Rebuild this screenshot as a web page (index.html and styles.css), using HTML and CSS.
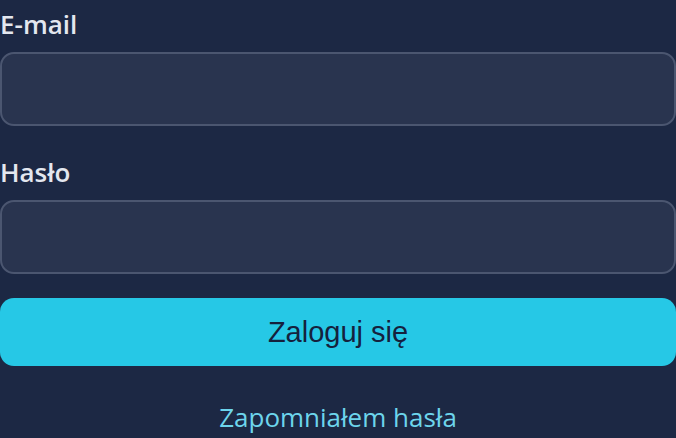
FILE: index.html
```html
<!DOCTYPE html>
<html lang="pl">
<head>
<meta charset="utf-8">
<link rel="stylesheet" href="styles.css">
</head>
<body>
<form class="login">
  <div class="field">
    <label class="label" for="email">E-mail</label>
    <input class="input" id="email" type="email">
  </div>
  <div class="field">
    <label class="label" for="pass">Hasło</label>
    <input class="input" id="pass" type="password">
  </div>
  <button class="btn" type="button">Zaloguj się</button>
  <div class="forgot"><a class="link" href="#">Zapomniałem hasła</a></div>
</form>
</body>
</html>
```
FILE: styles.css
```css
html, body {
  margin: 0;
  padding: 0;
  background: #1c2844;
  overflow: hidden;
}
.login {
  display: flex;
  flex-direction: column;
  padding-top: 6px;
  font-family: "Open Sans", "Noto Sans", sans-serif;
}
.field {
  display: flex;
  flex-direction: column;
  margin-bottom: 28px;
}
.login .field:nth-of-type(2) { margin-bottom: 24px; }
.label {
  display: block;
  color: #e3e7ef;
  font-size: 26px;
  font-weight: 600;
  line-height: 36px;
  margin-bottom: 10px;
}
.input {
  box-sizing: border-box;
  height: 74px;
  width: 100%;
  margin: 0;
  background: #29344f;
  border: 2px solid #4b5670;
  border-radius: 14px;
  outline: none;
  color: #e3e7ef;
  font-size: 24px;
}
.btn {
  height: 68px;
  width: 100%;
  border: none;
  border-radius: 14px;
  background: #26c8e6;
  color: #15213d;
  font-family: "Liberation Sans", Arial, sans-serif;
  font-size: 29px;
  padding: 0;
}
.forgot {
  text-align: center;
  margin-top: 34px;
}
.link {
  color: #6dd5ec;
  text-decoration: none;
  font-size: 26px;
  line-height: 34px;
}
```
